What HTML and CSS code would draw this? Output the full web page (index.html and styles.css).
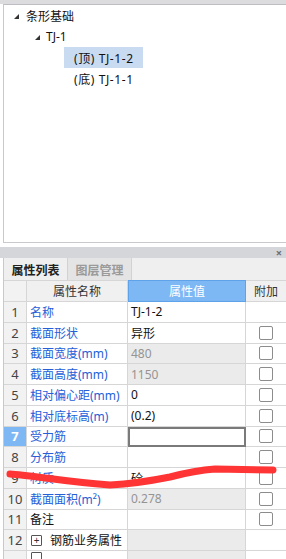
FILE: index.html
```html
<!DOCTYPE html>
<html lang="zh-CN">
<head>
    <meta charset="UTF-8">
    <title>属性列表</title>
    <link rel="stylesheet" href="styles.css">
</head>
<body>
<div class="dock">
    <div class="dock-title"></div>

    <!-- tree of components -->
    <div class="tree-panel">
        <div class="node lvl0"><i class="tri"></i><span>条形基础</span></div>
        <div class="node lvl1"><i class="tri"></i><span>TJ-1</span></div>
        <div class="node lvl2 selected"><span>(顶) TJ-1-2</span></div>
        <div class="node lvl2"><span>(底) TJ-1-1</span></div>
    </div>

    <div class="panel-bar"><span class="close">×</span></div>

    <div class="tabs">
        <div class="tab active">属性列表</div>
        <div class="tab">图层管理</div>
    </div>

    <!-- property grid -->
    <div class="grid">
        <div class="hd num"></div>
        <div class="hd">属性名称</div>
        <div class="hd val">属性值</div>
        <div class="hd">附加</div>

        <div class="num">1</div><div class="name">名称</div><div class="v">TJ-1-2</div><div class="add"></div>
        <div class="num">2</div><div class="name">截面形状</div><div class="v">异形</div><div class="add"><b class="chk"></b></div>
        <div class="num">3</div><div class="name">截面宽度(mm)</div><div class="v ro">480</div><div class="add"><b class="chk"></b></div>
        <div class="num">4</div><div class="name">截面高度(mm)</div><div class="v ro">1150</div><div class="add"><b class="chk"></b></div>
        <div class="num">5</div><div class="name">相对偏心距(mm)</div><div class="v">0</div><div class="add"><b class="chk"></b></div>
        <div class="num">6</div><div class="name">相对底标高(m)</div><div class="v">(0.2)</div><div class="add"><b class="chk"></b></div>
        <div class="num cur">7</div><div class="name">受力筋</div><div class="v edit"></div><div class="add"><b class="chk"></b></div>
        <div class="num">8</div><div class="name">分布筋</div><div class="v"></div><div class="add"><b class="chk"></b></div>
        <div class="num">9</div><div class="name">材质</div><div class="v">砼</div><div class="add"><b class="chk"></b></div>
        <div class="num">10</div><div class="name">截面面积(m²)</div><div class="v ro">0.278</div><div class="add"><b class="chk"></b></div>
        <div class="num">11</div><div class="name plain">备注</div><div class="v"></div><div class="add"><b class="chk"></b></div>
        <div class="num">12</div><div class="name plain group"><b class="plus">+</b>钢筋业务属性</div><div class="v ro"></div><div class="add"></div>
        <div class="num"></div><div class="name plain group top"><b class="plus"></b></div><div class="v ro"></div><div class="add"></div>
    </div>

    <!-- red marker scribble drawn over the grid -->
    <svg class="scribble" width="286" height="559" viewBox="0 0 286 559">
        <path d="M10 474 C 30 475, 60 481, 110 485 C 130 484, 150 481, 170 477 C 185 473, 200 470, 215 469 L 273 470" />
    </svg>
</div>
</body>
</html>
```

FILE: styles.css
```css
/* Page */
body {
    margin: 0;
    background: #ffffff;
    font-family: "Noto Sans", "Noto Sans CJK SC", sans-serif;
    font-size: 12px;
    color: #222;
}

.dock {
    position: relative;
    width: 286px;
    height: 559px;
    overflow: hidden;
}

/* Cut-off title strip at the very top */
.dock-title {
    height: 4px;
    background: #dcdcdf;
}

/* Tree panel */
.tree-panel {
    box-sizing: border-box;
    height: 239px;
    margin-left: 3px;
    border-top: 1px solid #bdbdc3;
    border-left: 1px solid #c9c9c9;
    border-bottom: 1px solid #c9c9c9;
    background: #ffffff;
}

.node {
    height: 21px;
    display: flex;
    align-items: center;
    font-size: 12px;
    color: #111;
}

.node.lvl0 { padding-left: 10px; }
.node.lvl1 { padding-left: 31px; }
.node.lvl2 {
    margin-left: 60px;
    width: 79px;
    padding-left: 10px;
    box-sizing: border-box;
    letter-spacing: 0.6px;
    white-space: pre;
}

.node.selected {
    background: #c9dbf1;
}

.tri {
    width: 0;
    height: 0;
    border-left: 5px solid transparent;
    border-bottom: 5px solid #333;
    margin-right: 7px;
    margin-top: 1px;
}

.node.lvl1 .tri { margin-right: 6px; }

/* Dock header bar with the close cross */
.panel-bar {
    height: 11px;
    margin-top: 4px;
    background: #d5d6da;
    display: flex;
    justify-content: flex-end;
    align-items: center;
}

.close {
    font-size: 11px;
    line-height: 11px;
    color: #6f6f6f;
    margin-right: 4px;
    font-weight: bold;
}

/* Tabs */
.tabs {
    height: 22px;
    margin-left: 3px;
    background: #efefef;
    display: flex;
    box-sizing: border-box;
    border-left: 1px solid #c9c9c9;
}

.tab {
    width: 64px;
    display: flex;
    align-items: center;
    justify-content: center;
    font-weight: bold;
    font-size: 12px;
    color: #9a9a9a;
    background: #e4e4e4;
    border-right: 1px solid #d2d2d2;
    padding-top: 2px;
    box-sizing: border-box;
}

.tab.active {
    color: #222;
    background: #efefef;
}

/* Property grid */
.grid {
    margin-left: 3px;
    display: grid;
    grid-template-columns: 23px 101px 118px 41px;
    grid-template-rows: 22px;
    grid-auto-rows: 20.75px;
    border-left: 1px solid #c9c9c9;
}

.grid > div {
    box-sizing: border-box;
    border-right: 1px solid #d6d6d6;
    border-bottom: 1px solid #d6d6d6;
    display: flex;
    align-items: center;
    white-space: nowrap;
    overflow: hidden;
}

.grid .hd {
    justify-content: center;
    background: #f0f0f0;
    color: #333;
    border-top: 1px solid #d6d6d6;
}

.grid .hd.val {
    background: #7db8f5;
    color: #ffffff;
    border: 1px solid #5ea3ea;
}

.grid .num {
    justify-content: center;
    background: #f2f2f2;
    color: #444;
    font-size: 13px;
}

.grid .num.cur {
    background: #7db8f5;
    color: #ffffff;
    font-weight: bold;
}

.grid .name {
    padding-left: 3px;
    color: #2560d8;
}

.grid .name.plain {
    color: #111;
}

.grid .name.top {
    align-items: flex-start;
    padding-top: 1px;
}

.grid .v {
    padding-left: 3px;
    color: #111;
}

.grid .v.ro {
    background: #ebebeb;
    color: #949494;
}

.grid .v.edit {
    border: 2px solid #7a7a7a;
}

.grid .add {
    justify-content: center;
}

.chk {
    width: 12px;
    height: 12px;
    border: 1px solid #8c8c8c;
    border-radius: 2px;
    background: #fff;
}

.plus {
    width: 9px;
    height: 9px;
    border: 1px solid #555;
    border-radius: 1px;
    font-weight: normal;
    font-size: 10px;
    line-height: 8px;
    text-align: center;
    margin: 0 8px 0 1px;
    color: #333;
}

/* Marker stroke over the grid */
.scribble {
    position: absolute;
    left: 0;
    top: 0;
    pointer-events: none;
}

.scribble path {
    fill: none;
    stroke: #ff3535;
    stroke-width: 7;
    stroke-linecap: round;
    stroke-linejoin: round;
}
```
